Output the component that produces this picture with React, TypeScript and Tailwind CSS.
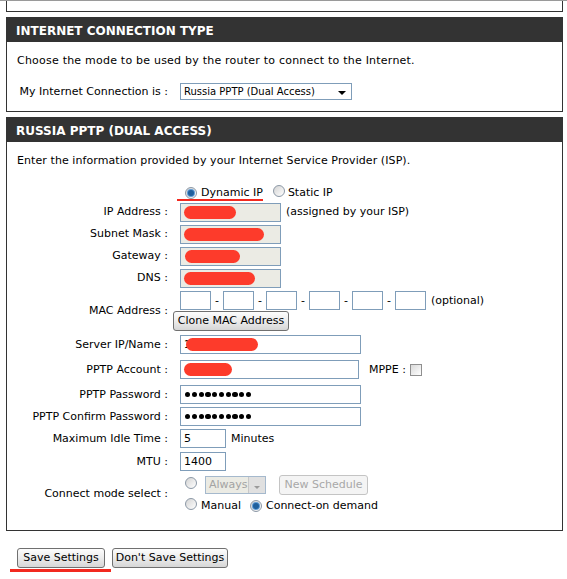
import React from "react";

const font = "font-['Tahoma','DejaVu_Sans',sans-serif]";

function Radio({ checked = false }: { checked?: boolean }) {
  return (
    <span className="inline-flex h-[12px] w-[12px] items-center justify-center rounded-full border border-[#8c98a6] bg-gradient-to-br from-[#d4d4d4] to-white">
      {checked && (
        <span className="h-[6px] w-[6px] rounded-full bg-[#1f5f9c] shadow-[0_0_0_1px_#5d9bd6]" />
      )}
    </span>
  );
}

function Field({
  label,
  className = "",
  children,
}: {
  label: string;
  className?: string;
  children: React.ReactNode;
}) {
  return (
    <div className={`flex items-center ${className}`}>
      <div className="w-[161px] shrink-0 text-right">{label}</div>
      <div className="ml-[12px] flex items-center">{children}</div>
    </div>
  );
}

function TextBox({
  w,
  disabled = false,
  children,
}: {
  w: string;
  disabled?: boolean;
  children?: React.ReactNode;
}) {
  return (
    <div
      className={`flex h-[19px] items-center border border-[#7f9db9] pl-[3px] text-[11px] ${w} ${
        disabled ? "bg-[#ebebe4]" : "bg-white"
      }`}
    >
      {children}
    </div>
  );
}

function Blob({ w, className = "" }: { w: string; className?: string }) {
  return <span className={`h-[13px] rounded-full bg-[#fd3b2b] ${w} ${className}`} />;
}

function Dots() {
  return (
    <span className="flex gap-[1.6px] pl-[1px]">
      {Array.from({ length: 10 }).map((_, i) => (
        <span key={i} className="h-[5.2px] w-[5.2px] rounded-full bg-black" />
      ))}
    </span>
  );
}

function XpButton({ children, className = "" }: { children: React.ReactNode; className?: string }) {
  return (
    <button
      className={`flex h-[20px] items-center justify-center rounded-[3px] border border-[#707070] bg-gradient-to-b from-[#fdfdfd] via-[#ececec] to-[#d6d6d6] text-[11px] text-black ${className}`}
    >
      {children}
    </button>
  );
}

export default function App() {
  return (
    <div className={`relative h-[579px] w-[567px] overflow-hidden bg-white text-[11px] leading-[14px] text-black ${font}`}>
      <div className="h-px bg-[#9a9a9a]" />
      <div className="ml-[6px] h-[11px] w-[557px] border-x border-b border-[#333]" />

      {/* Internet connection type */}
      <div className="ml-[6px] mt-[5px] w-[557px] border border-[#333]">
        <div className="flex h-[24px] items-center bg-[#333] pl-[9px] pt-[2px] text-[12px] font-bold text-white font-['Verdana','DejaVu_Sans',sans-serif]">
          INTERNET CONNECTION TYPE
        </div>
        <div className="pb-[11px]">
          <p className="pl-[10px] pt-[12px] tracking-[0.22px]">
            Choose the mode to be used by the router to connect to the Internet.
          </p>
          <Field label="My Internet Connection is :" className="mt-[15px]">
            <div className="flex h-[17px] w-[172px] items-center justify-between border border-[#7f9db9] bg-white pl-[3px] pr-[5px] text-[10px]">
              <span>Russia PPTP (Dual Access)</span>
              <span className="mt-[3px] h-0 w-0 border-x-[4px] border-t-[4px] border-x-transparent border-t-black" />
            </div>
          </Field>
        </div>
      </div>

      {/* Russia PPTP */}
      <div className="relative ml-[6px] mt-[5px] w-[557px] border border-[#333]">
        <div className="flex h-[24px] items-center bg-[#333] pl-[9px] pt-[2px] text-[12px] font-bold text-white font-['Verdana','DejaVu_Sans',sans-serif]">
          RUSSIA PPTP (DUAL ACCESS)
        </div>
        <div className="pb-[17px]">
          <p className="pl-[10px] pt-[12px] tracking-[0.08px]">
            Enter the information provided by your Internet Service Provider (ISP).
          </p>

          <div className="mt-[18px] flex h-[14px] items-center pl-[178px]">
            <Radio checked />
            <span className="ml-[4px]">Dynamic IP</span>
            <span className="ml-[10px]">
              <Radio />
            </span>
            <span className="ml-[3px]">Static IP</span>
          </div>

          <Field label="IP Address :" className="mt-[2px] h-[20px]">
            <TextBox w="w-[101px]" disabled>
              <Blob w="w-[52px]" />
            </TextBox>
            <span className="ml-[5px]">(assigned by your ISP)</span>
          </Field>
          <Field label="Subnet Mask :" className="mt-[2px] h-[20px]">
            <TextBox w="w-[101px]" disabled>
              <Blob w="w-[80px]" />
            </TextBox>
          </Field>
          <Field label="Gateway :" className="mt-[2px] h-[20px]">
            <TextBox w="w-[101px]" disabled>
              <span className="ml-[1px]" />
              <Blob w="w-[55px]" />
            </TextBox>
          </Field>
          <Field label="DNS :" className="mt-[2px] h-[20px]">
            <TextBox w="w-[101px]" disabled>
              <Blob w="w-[71px]" />
            </TextBox>
          </Field>

          <Field label="MAC Address :" className="mt-[3px]">
            <div className="flex flex-col items-start">
              <div className="flex items-center">
                {[0, 1, 2, 3, 4, 5].map((i) => (
                  <React.Fragment key={i}>
                    {i > 0 && <span className="w-[12px] text-center">-</span>}
                    <div className="h-[19px] w-[31px] border border-[#7f9db9] bg-white" />
                  </React.Fragment>
                ))}
                <span className="ml-[5px]">(optional)</span>
              </div>
              <XpButton className="-ml-[7px] mt-px h-[19px] w-[116px]">Clone MAC Address</XpButton>
            </div>
          </Field>

          <Field label="Server IP/Name :" className="mt-[4px]">
            <TextBox w="w-[181px]">
              <span className="text-[10px] leading-none">1</span>
              <Blob w="w-[72px]" className="-ml-[4px]" />
            </TextBox>
          </Field>
          <Field label="PPTP Account :" className="mt-[6px]">
            <TextBox w="w-[179px]">
              <Blob w="w-[48px]" />
            </TextBox>
            <span className="ml-[10px]">MPPE :</span>
            <span className="ml-[4px] h-[12px] w-[12px] border border-[#8f8f8f] bg-gradient-to-br from-[#d9d9d9] to-white" />
          </Field>
          <Field label="PPTP Password :" className="mt-[6px]">
            <TextBox w="w-[181px]">
              <Dots />
            </TextBox>
          </Field>
          <Field label="PPTP Confirm Password :" className="mt-[3px]">
            <TextBox w="w-[181px]">
              <Dots />
            </TextBox>
          </Field>
          <Field label="Maximum Idle Time :" className="mt-[3px]">
            <TextBox w="w-[46px]">5</TextBox>
            <span className="ml-[5px]">Minutes</span>
          </Field>
          <Field label="MTU :" className="mt-[4px]">
            <TextBox w="w-[46px]">1400</TextBox>
          </Field>

          <Field label="Connect mode select :" className="mt-[4px]">
            <div className="flex flex-col">
              <div className="flex h-[20px] items-center">
                <span className="ml-[5px]">
                  <Radio />
                </span>
                <div className="ml-[8px] flex h-[18px] w-[61px] items-center border border-[#a5b9cd] bg-[#ebebe4] text-[#a3a3a3]">
                  <span className="flex-1 pl-[3px]">Always</span>
                  <span className="flex h-full w-[17px] items-center justify-center border-l border-[#c8c8c8] bg-[#e0e0e0]">
                    <span className="mt-[4px] h-0 w-0 border-x-[3px] border-t-[3px] border-x-transparent border-t-[#9a9a9a]" />
                  </span>
                </div>
                <button className="ml-[13px] flex h-[20px] w-[89px] items-center justify-center rounded-[3px] border border-[#c4c4c4] bg-[#f4f4f4] text-[11px] text-[#a8a8a8]">
                  New Schedule
                </button>
              </div>
              <div className="mt-[4px] flex h-[14px] items-center">
                <span className="ml-[5px]">
                  <Radio />
                </span>
                <span className="ml-[4px]">Manual</span>
                <span className="ml-[9px]">
                  <Radio checked />
                </span>
                <span className="ml-[4px]">Connect-on demand</span>
              </div>
            </div>
          </Field>
        </div>

        {/* annotation under Dynamic IP */}
        <div className="absolute left-[170px] top-[81px] h-[2px] w-[86px] bg-[#f2291f]" />
      </div>

      <div className="ml-[17px] mt-[17px] flex gap-[7px]">
        <XpButton className="w-[88px]">Save Settings</XpButton>
        <XpButton className="w-[116px]">Don&apos;t Save Settings</XpButton>
      </div>
      <div className="absolute left-[10px] top-[569px] h-[3px] w-[101px] bg-[#f2291f]" />
    </div>
  );
}
